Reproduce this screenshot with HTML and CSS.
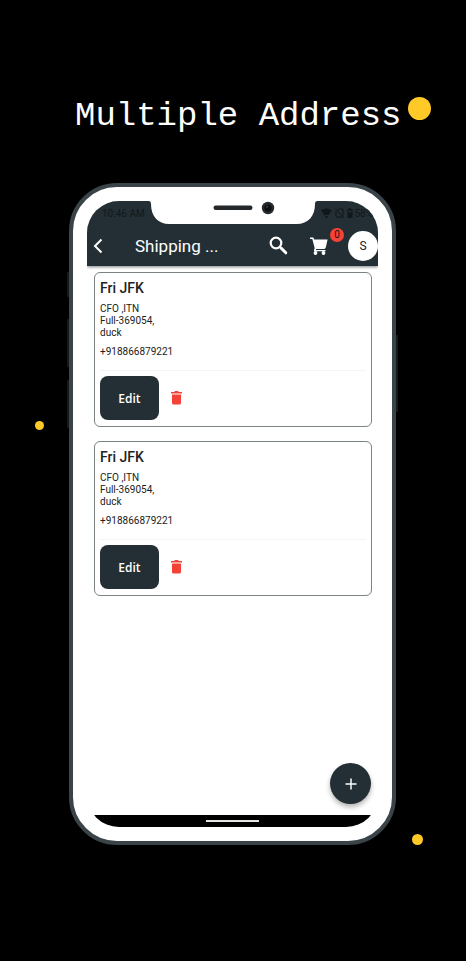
FILE: index.html
```html
<!DOCTYPE html>
<html lang="en">
<head>
<meta charset="utf-8">
<meta name="viewport" content="width=device-width, initial-scale=1">
<title>Multiple Address</title>
<link rel="stylesheet" href="styles.css">
</head>
<body>
<main class="promo">
  <h1 class="headline">Multiple Address</h1>
  <span class="dot dot-large"></span>
  <span class="dot dot-left"></span>
  <span class="dot dot-right"></span>

  <div class="phone">
    <span class="side-key key-mute"></span>
    <span class="side-key key-up"></span>
    <span class="side-key key-down"></span>
    <span class="side-key key-power"></span>

    <div class="screen">
      <svg class="notch" width="169" height="23" viewBox="0 0 169 23" aria-hidden="true">
        <path fill="#fff" d="M0 0Q2.500 0 2.500 3C2.500 15 9 23 21 23H148C160 23 166.500 15 166.500 3Q166.500 0 169 0Z"/>
        <rect x="65" y="4.500" width="39" height="4.500" rx="2.200" fill="#24282b"/>
        <circle cx="119.500" cy="7" r="6.200" fill="#24292c"/>
        <circle cx="119.500" cy="7" r="3.600" fill="#0b0d0e"/>
        <circle cx="118.500" cy="5.800" r="1" fill="#3b4347"/>
      </svg>

      <header class="top">
        <div class="status">
          <span>10:46 AM</span>
          <span class="status-icons">
            <svg width="11" height="11" viewBox="0 0 11 11" aria-hidden="true">
              <path fill="currentColor" d="M0 2.500Q5.500-1.500 11 2.500L7.500 7H3.500Z"/>
              <path fill="currentColor" d="M4 8h3L5.500 11zM2 6h2v2z"/>
            </svg>
            <svg width="9" height="10" viewBox="0 0 9 10" aria-hidden="true">
              <path fill="none" stroke="currentColor" d="M1 3v6h7V1H4L2.500 2.500M.5.500l8 9"/>
            </svg>
            <span class="battery">
              <svg width="6" height="10" viewBox="0 0 6 10" aria-hidden="true">
                <path fill="currentColor" d="M2 0h2v1h1.500v9h-5V1H2z"/>
                <path fill="#232f34" d="M1.500 2.500h3v2h-3z"/>
              </svg>
              58%
            </span>
          </span>
        </div>
        <nav class="bar">
          <button class="icon-button back" aria-label="Back">
            <svg width="10" height="16" viewBox="0 0 10 16"><path fill="none" stroke="#fff" stroke-width="2" d="M8.500 1.500L2 8l6.500 6.500"/></svg>
          </button>
          <h2 class="bar-title">Shipping ...</h2>
          <button class="icon-button search" aria-label="Search">
            <svg width="19" height="19" viewBox="0 0 19 19"><circle cx="7" cy="7" r="5.300" fill="none" stroke="#fff" stroke-width="2.200"/><path stroke="#fff" stroke-width="3" stroke-linecap="round" d="M12 12l4.800 4.800"/></svg>
          </button>
          <button class="icon-button cart" aria-label="Cart, 0 items">
            <svg width="18" height="18" viewBox="0 0 18 18"><path fill="#fff" d="M0 .5H3.300L4.200 2.600H17.600L15.800 10.600Q15.500 12 14 12H6.200L5.800 13H15.500V14.300H5Q3.600 14.300 4 12.900L4.700 11.200 2.300 2H0Z"/><circle cx="5.500" cy="16" r="1.900" fill="#fff"/><circle cx="13.500" cy="16" r="1.900" fill="#fff"/></svg>
            <span class="badge">0</span>
          </button>
          <button class="avatar" aria-label="Account">S</button>
        </nav>
      </header>

      <section class="list">
        <article class="card">
          <h3 class="name">Fri JFK</h3>
          <p class="address">CFO ,ITN<br>Full-369054,<br>duck</p>
          <p class="tel">+918866879221</p>
          <div class="actions">
            <button class="edit">Edit</button>
            <button class="icon-button" aria-label="Delete address">
              <svg width="11" height="14" viewBox="0 0 11 14"><path fill="#f44336" d="M0 1h3.200L4 0h3l.8 1H11v1.400H0zM1 3.400h9V12q0 1.600-1.600 1.600H2.600Q1 13.600 1 12z"/></svg>
            </button>
          </div>
        </article>
        <article class="card">
          <h3 class="name">Fri JFK</h3>
          <p class="address">CFO ,ITN<br>Full-369054,<br>duck</p>
          <p class="tel">+918866879221</p>
          <div class="actions">
            <button class="edit">Edit</button>
            <button class="icon-button" aria-label="Delete address">
              <svg width="11" height="14" viewBox="0 0 11 14"><path fill="#f44336" d="M0 1h3.200L4 0h3l.8 1H11v1.400H0zM1 3.400h9V12q0 1.600-1.600 1.600H2.600Q1 13.600 1 12z"/></svg>
            </button>
          </div>
        </article>
      </section>

      <button class="add" aria-label="Add address">
        <svg width="12" height="12" viewBox="0 0 12 12"><path stroke="#fff" stroke-width="1.500" d="M6 .5v11M.5 6h11"/></svg>
      </button>
      <footer class="home-bar"><span class="home-line"></span></footer>
    </div>
  </div>
</main>
</body>
</html>
```
FILE: styles.css
```css
* {
  box-sizing: border-box;
}

body {
  margin: 0;
  background: #000;
  font-family: Roboto, "Liberation Sans", sans-serif;
}

h1, h2, h3, p {
  margin: 0;
  font-weight: 400;
}

button {
  padding: 0;
  border: 0;
  background: none;
  font-family: inherit;
  cursor: pointer;
}

svg {
  display: block;
}

.promo {
  position: relative;
  display: flex;
  flex-direction: column;
  min-height: 100vh;
  padding: 92px 70px 116px 69px;
}

.headline {
  margin-bottom: 43px;
  padding-left: 6px;
  color: #fff;
  font-family: "Liberation Mono", monospace;
  font-size: 34px;
  line-height: 48px;
  white-space: nowrap;
}

.dot {
  position: absolute;
  border-radius: 50%;
  background: #ffca28;
}

.dot-large {
  top: 97px;
  right: 35px;
  width: 23px;
  height: 23px;
}

.dot-left {
  top: 421px;
  left: 35px;
  width: 9px;
  height: 9px;
}

.dot-right {
  right: 43px;
  bottom: 116px;
  width: 11px;
  height: 11px;
}

.phone {
  position: relative;
  display: flex;
  flex: 1;
  padding: 14px;
  border: 4px solid #3a4448;
  border-radius: 48px;
  background: #fff;
}

.side-key {
  position: absolute;
  left: -6px;
  width: 2px;
  height: 48px;
  background: #15191b;
}

.key-mute {
  top: 85px;
  height: 25px;
}

.key-up {
  top: 132px;
}

.key-down {
  top: 193px;
}

.key-power {
  top: 148px;
  right: -6px;
  left: auto;
  height: 77px;
}

.screen {
  position: relative;
  display: flex;
  flex: 1;
  flex-direction: column;
  min-width: 0;
  overflow: hidden;
  border-radius: 32px;
  background: #fff;
}

.notch {
  position: absolute;
  top: 0;
  left: 50%;
  transform: translateX(-50%);
}

.top {
  background: #232f34;
  box-shadow: 0 1px 3px rgba(0, 0, 0, 0.5);
}

.status {
  display: flex;
  align-items: center;
  justify-content: space-between;
  height: 24px;
  padding: 0 5px 0 15px;
  color: #10181b;
  font-size: 10px;
}

.status-icons {
  display: flex;
  align-items: center;
  gap: 3px;
}

.battery {
  display: flex;
  align-items: center;
  gap: 1px;
}

.bar {
  display: flex;
  align-items: center;
  height: 41px;
  padding-left: 6px;
}

.icon-button {
  position: relative;
}

.bar-title {
  flex: 1;
  margin-left: 32px;
  color: #fff;
  font-size: 17px;
  line-height: 24px;
}

.cart {
  margin-left: 22px;
}

.badge {
  position: absolute;
  top: -9px;
  right: -16px;
  width: 14px;
  height: 14px;
  border-radius: 50%;
  background: #f44336;
  color: #20100f;
  font-size: 10px;
  line-height: 14px;
}

.avatar {
  width: 30px;
  height: 30px;
  margin-left: 20px;
  border-radius: 50%;
  background: #fff;
  color: #222;
  font-size: 12px;
}

.list {
  display: flex;
  flex: 1;
  flex-direction: column;
  gap: 14px;
  padding: 6px 6px 60px 7px;
}

.card {
  padding: 6px 5px;
  border: 1px solid #7b8385;
  border-radius: 6px;
  color: #212121;
}

.name {
  font-size: 14px;
  font-weight: 500;
  line-height: 18px;
}

.address {
  margin-top: 6px;
  font-size: 10px;
  line-height: 12px;
}

.tel {
  margin-top: 7px;
  font-size: 10px;
  line-height: 12px;
}

.actions {
  display: flex;
  align-items: center;
  gap: 12px;
  margin-top: 12px;
  padding-top: 5px;
  border-top: 1px solid #f4f4f4;
}

.edit {
  width: 59px;
  height: 44px;
  border-radius: 8px;
  background: #232f34;
  color: #fff;
  font-family: "Open Sans", sans-serif;
  font-size: 12px;
  font-weight: 600;
}

.add {
  position: absolute;
  right: 7px;
  bottom: 23px;
  display: grid;
  place-items: center;
  width: 41px;
  height: 41px;
  border-radius: 50%;
  background: #232f34;
  box-shadow: 0 3px 5px rgba(0, 0, 0, 0.3);
}

.home-bar {
  display: grid;
  place-items: center;
  height: 12px;
  background: #000;
}

.home-line {
  width: 53px;
  height: 2px;
  background: #e4e4e0;
}
```
